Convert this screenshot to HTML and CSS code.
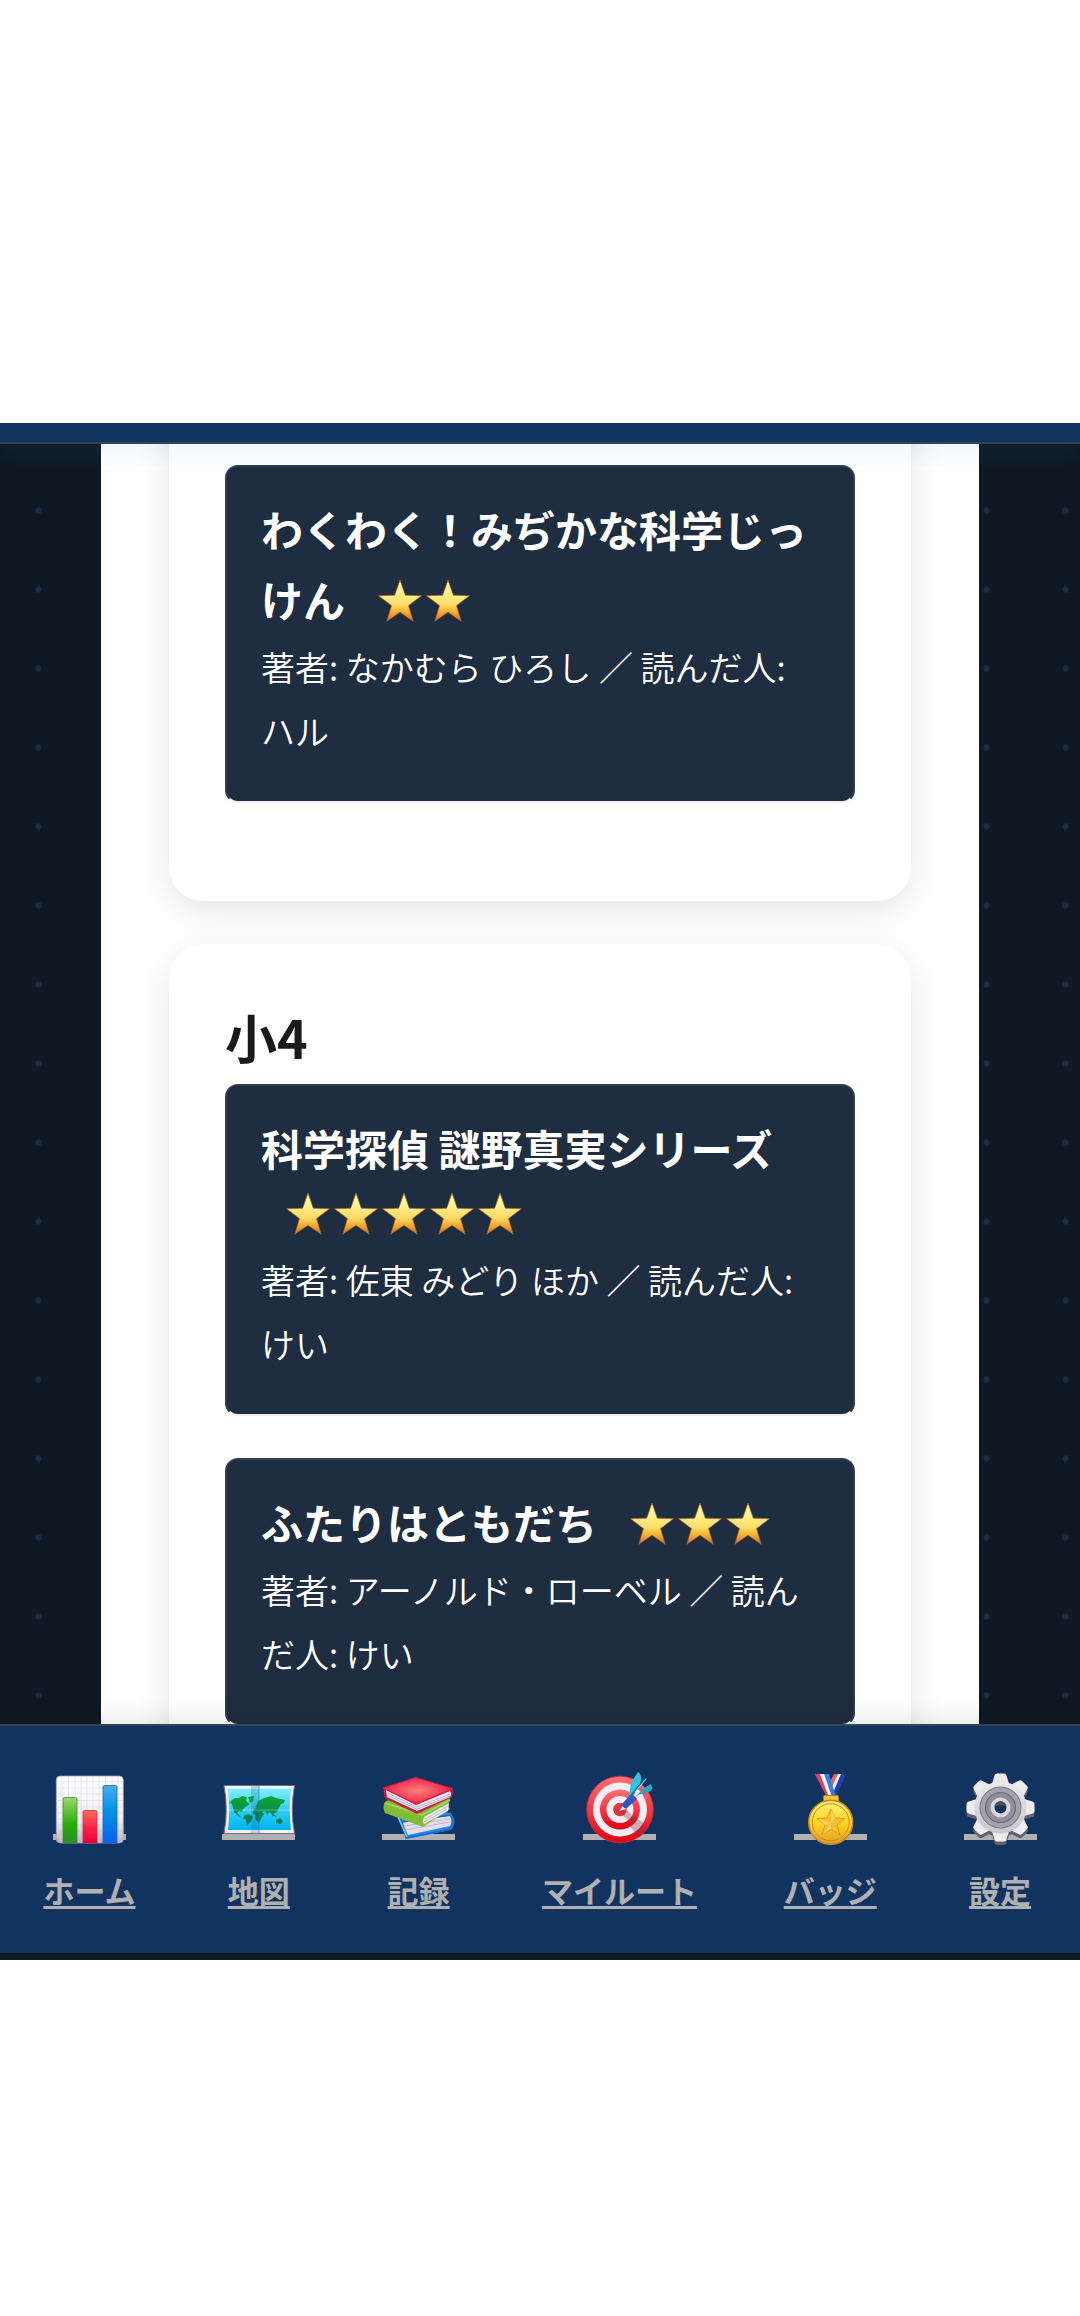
FILE: index.html
```html
<!DOCTYPE html>
<html lang="ja">
<head>
<meta charset="utf-8">
<meta name="viewport" content="width=device-width, initial-scale=1">
<title>読書記録</title>
<link rel="stylesheet" href="styles.css">
</head>
<body>
<svg class="defs" width="0" height="0" aria-hidden="true">
  <defs>
    <linearGradient id="gStar" x1="0" y1="0" x2="0" y2="1">
      <stop offset="0" stop-color="#fff6b0"/><stop offset=".3" stop-color="#fff09a"/><stop offset=".6" stop-color="#fcdc62"/><stop offset=".8" stop-color="#f3a82e"/><stop offset="1" stop-color="#d8604a"/>
    </linearGradient>
    <linearGradient id="gPaper" x1="0" y1="0" x2="0" y2="1"><stop offset="0" stop-color="#fff"/><stop offset=".65" stop-color="#f1f0f5"/><stop offset="1" stop-color="#b9b2cb"/></linearGradient>
    <linearGradient id="gGreen" x1="0" y1="0" x2="0" y2="1"><stop offset="0" stop-color="#9bd673"/><stop offset=".6" stop-color="#27ad04"/><stop offset="1" stop-color="#2e8b2b"/></linearGradient>
    <linearGradient id="gRed" x1="0" y1="0" x2="0" y2="1"><stop offset="0" stop-color="#ff6d62"/><stop offset=".5" stop-color="#fa2744"/><stop offset="1" stop-color="#e6003c"/></linearGradient>
    <linearGradient id="gBlue" x1="0" y1="0" x2="0" y2="1"><stop offset="0" stop-color="#48adf2"/><stop offset=".4" stop-color="#0795e5"/><stop offset="1" stop-color="#0562ea"/></linearGradient>
    <linearGradient id="gSea" x1="0" y1="0" x2="0" y2="1"><stop offset="0" stop-color="#7ff0ff"/><stop offset=".5" stop-color="#33cdf8"/><stop offset="1" stop-color="#00b4f2"/></linearGradient>
    <linearGradient id="gLand" x1="0" y1="0" x2="0" y2="1"><stop offset="0" stop-color="#0ba735"/><stop offset="1" stop-color="#05775c"/></linearGradient>
    <radialGradient id="gBook"><stop offset="0" stop-color="#ff8178"/><stop offset="1" stop-color="#f0214d"/></radialGradient>
    <linearGradient id="gTarget" x1="0" y1="0" x2="0" y2="1"><stop offset="0" stop-color="#f97272"/><stop offset=".5" stop-color="#ee3b48"/><stop offset="1" stop-color="#e4000c"/></linearGradient>
    <linearGradient id="gMedal" x1="0" y1="0" x2="0" y2="1"><stop offset="0" stop-color="#fff27a"/><stop offset=".55" stop-color="#ffd21f"/><stop offset="1" stop-color="#e19a2c"/></linearGradient>
    <linearGradient id="gSteel" gradientUnits="userSpaceOnUse" x1="0" y1="-33" x2="0" y2="33"><stop offset="0" stop-color="#efeef0"/><stop offset="1" stop-color="#c3c0ca"/></linearGradient>
    <symbol id="star" viewBox="0 0 44 44"><path fill="url(#gStar)" stroke="#a8651c" stroke-width=".7" stroke-linejoin="round" d="M22 1l5.300 15.200 16.200.5-13 9.900 4.700 15.700L22 33.200 8.800 42.300l4.700-15.700L.5 16.700l16.200-.5z"/></symbol>
    <g id="teeth"><path id="tooth" d="M-9-22L-6-32Q-5.500-34-3.500-34H3.500Q5.500-34 6-32L9-22z"/><use href="#tooth" transform="rotate(45)"/><use href="#tooth" transform="rotate(90)"/><use href="#tooth" transform="rotate(135)"/><use href="#tooth" transform="rotate(180)"/><use href="#tooth" transform="rotate(225)"/><use href="#tooth" transform="rotate(270)"/><use href="#tooth" transform="rotate(315)"/><circle r="26"/></g>
  </defs>
</svg>

<div class="app">
  <header class="topbar"></header>

  <main class="content">
    <div class="sheet">
      <section class="card card-scrolled">
        <article class="book">
          <strong class="book-title">わくわく！みぢかな科学じっけん</strong>
          <span class="stars" role="img" aria-label="星2つ"><svg><use href="#star"/></svg><svg><use href="#star"/></svg></span>
          <div class="book-meta">著者: なかむら ひろし ／ 読んだ人: ハル</div>
        </article>
      </section>

      <section class="card">
        <h2 class="grade">小4</h2>
        <article class="book">
          <strong class="book-title">科学探偵 謎野真実シリーズ</strong>
          <span class="stars" role="img" aria-label="星5つ"><svg><use href="#star"/></svg><svg><use href="#star"/></svg><svg><use href="#star"/></svg><svg><use href="#star"/></svg><svg><use href="#star"/></svg></span>
          <div class="book-meta">著者: 佐東 みどり ほか ／ 読んだ人: けい</div>
        </article>
        <article class="book">
          <strong class="book-title">ふたりはともだち</strong>
          <span class="stars" role="img" aria-label="星3つ"><svg><use href="#star"/></svg><svg><use href="#star"/></svg><svg><use href="#star"/></svg></span>
          <div class="book-meta">著者: アーノルド・ローベル ／ 読んだ人: けい</div>
        </article>
      </section>
    </div>
  </main>

  <nav class="tabs">
    <a class="tab" href="#home">
      <svg class="tab-icon" viewBox="0 0 73 73" aria-hidden="true">
        <path class="rule" d="M0 62h73v6H0z"/>
        <rect x="3.300" y="4" width="67" height="67" rx="4" fill="url(#gPaper)" stroke="#a59fb8" stroke-width=".8"/>
        <path d="M9 4v67M15.500 4v67M22 4v67M28 4v67M34 4v67M40 4v67M46 4v67M52.500 4v67M59 4v67M65 4v67M3 10h67M3 16h67M3 22h67M3 28.500h67M3 35h67M3 41h67M3 47h67M3 53h67M3 59h67M3 65h67" stroke="#cbc8dd" stroke-width=".5" opacity=".8"/>
        <path d="M10 71V27q0-1.500 1.500-1.500h11q1.500 0 1.500 1.500v44z" fill="url(#gGreen)" stroke="#3f8f2a" stroke-width=".8"/>
        <path d="M30 71V40q0-1.500 1.500-1.500h11q1.500 0 1.500 1.500v31z" fill="url(#gRed)" stroke="#c42c42" stroke-width=".8"/>
        <path d="M50 71V15q0-1.500 1.500-1.500h11q1.500 0 1.500 1.500v56z" fill="url(#gBlue)" stroke="#1765b4" stroke-width=".8"/>
      </svg>
      <span class="tab-label">ホーム</span>
    </a>
    <a class="tab" href="#map">
      <svg class="tab-icon" viewBox="0 0 73 73" aria-hidden="true">
        <path class="rule" d="M0 62h73v6H0z"/>
        <path d="M2 13.500H72.500Q68 38 72.500 61.500H2Q6.500 38 2 13.500z" fill="#eef0fa" stroke="#716f93" stroke-width="1"/>
        <path d="M6 17H69Q66.500 38 69 58H6Q8.500 38 6 17z" fill="url(#gSea)"/>
        <path fill="url(#gLand)" d="M10 28l3-2 4 0 3-2 5 1-1 4 4 3-3 2-4 3-1 3-3-1-2 2 4 4-3-1-4-4-1-4-1-4-2-1-2 1zM26 25l6-1-1 5-3 2zM23 43l4-1 4 3-2 4-4 5-1-6-3-2zM35 33l1-4 6-3 7-2 5 2 9 2-1 3-3 1-2 4-2 4-3 1-1 4-2-4-2-1-2 3-2-4-3 1 2 2-3 5-2 4-3-3-1-5-2-2 1-4 3-1-2-2zM51 42l2 1 2 2-3-1zM54 48l4-2 3 3-2 3-5-1z"/>
        <path d="M29 14H37V61H29z" fill="#064a7d" opacity=".2"/><path d="M37 14v47" stroke="#1780b9" stroke-width=".6"/><path d="M4 38h66" stroke="#fff" opacity=".35" stroke-width="1"/>
      </svg>
      <span class="tab-label">地図</span>
    </a>
    <a class="tab" href="#records">
      <svg class="tab-icon" viewBox="0 0 73 73" aria-hidden="true">
        <path class="rule" d="M0 62h73v6H0z"/>
        <path d="M15 43l10 24 44-9q4-4 3-11l-3-6-28-4z" fill="#268ae0"/>
        <path d="M20 50l48-6q3 5 0 10l-42 9z" fill="#e4deee"/><path d="M22 54l46-7M23 58l45-8" stroke="#b7abc5" stroke-width=".8"/>
        <path d="M15 43l6 7 48-7M20 50l4 16 44-9q4-6 1-13" fill="none" stroke="#0c6dce" stroke-width="1.500"/><path d="M16 45l9 20" stroke="#80cbff" stroke-width="1.500"/>
        <path d="M3 30q-3 4 0 11l38 14 27-18-2-3 2-8-31-9-33 12z" fill="#80bd36"/>
        <path d="M42 45l25-14-1 8-24 13q-2-3 0-7z" fill="#f1edf4"/><path d="M43 47l23-13M42 50l23-13" stroke="#b7abc5" stroke-width=".8"/>
        <path d="M3 31l37 12 28-15" fill="none" stroke="#a5d85a" stroke-width="1.500"/>
        <path d="M2 16q-1 8 2 11l31 15 35-17q2-4 0-9l-35 9z" fill="#cf1846"/>
        <path d="M4 18l30 15 34-14q2 3 0 6L35 39 5 25z" fill="#f2edf4"/><path d="M5 21l30 14 33-13M5 23l30 14 33-13" fill="none" stroke="#aaa1b8" stroke-width=".8"/>
        <path d="M1 16L33.600 5.500 70.500 16.500 34.500 32z" fill="url(#gBook)" stroke="#d21c46" stroke-width="1" stroke-linejoin="round"/>
      </svg>
      <span class="tab-label">記録</span>
    </a>
    <a class="tab" href="#route">
      <svg class="tab-icon" viewBox="0 0 73 73" aria-hidden="true">
        <path class="rule" d="M0 62h73v6H0z"/>
        <circle cx="37" cy="37.500" r="33.300" fill="url(#gTarget)" stroke="#d62b37" stroke-width=".8"/>
        <circle cx="37" cy="37.500" r="27" fill="#f9edf3"/><circle cx="37" cy="37.500" r="20" fill="url(#gTarget)"/><circle cx="37" cy="37.500" r="13.500" fill="#f9edf3"/><circle cx="37" cy="37.500" r="6.800" fill="#df3442"/>
        <path d="M38 39l7 0 6 6 9 5 2 12-6 3-8-9-1-7-7-5z" fill="#77344d" opacity=".35"/>
        <path d="M36 39l4-5 3 3z" fill="#f3f1f5"/>
        <path d="M39 32l9-10 6 5-10 9q-4 1-5-4z" fill="#2c57c5"/>
        <path d="M46 23l2-12 7-11q4 3 3 9l-7 14z" fill="#30c2de"/><path d="M51 26l10-10 7-4q4 6-3 8l-10 3z" fill="#20a7d2"/>
        <path d="M46 26L63 6" stroke="#0b73af" stroke-width="2"/><path d="M52 20L63 7" stroke="#83e9f3" stroke-width="1"/>
      </svg>
      <span class="tab-label">マイルート</span>
    </a>
    <a class="tab" href="#badges">
      <svg class="tab-icon" viewBox="0 0 73 73" aria-hidden="true">
        <path class="rule" d="M0 62h73v6H0z"/>
        <path d="M40 2h12L42 25h-8l2-10z" fill="#1e3fac"/><path d="M40 2h4l-8 17-1-7z" fill="#e6635e"/><path d="M44 2h3L39 21l-3-2z" fill="#f4f1f7"/>
        <path d="M21 2h14l7 23h-9z" fill="#3a78e5"/><path d="M21 2h5l10 23h-3z" fill="#e4405a"/><path d="M26 2h4l8 23h-3z" fill="#fff"/>
        <rect x="29.500" y="23.500" width="15" height="6" rx="1" fill="#f3c33a" stroke="#bd7c14" stroke-width="1"/>
        <circle cx="36.700" cy="50.300" r="22" fill="url(#gMedal)" stroke="#c28620" stroke-width="1.500"/>
        <circle cx="36.700" cy="50.300" r="18.500" fill="none" stroke="#c88c17" stroke-width="1"/>
        <path d="M37 37l4 9 10 .5-8 6.500 3 9.500-9-5-9 5 3-9.500-8-6.500L33 46z" fill="#f4bf32" stroke="#d0921e" stroke-width=".8"/>
        <path d="M37 37v14l4-5zM24 47l13 4-6 2zM29 62l8-11 0 6z" fill="#ffe671" opacity=".6"/>
      </svg>
      <span class="tab-label">バッジ</span>
    </a>
    <a class="tab" href="#settings">
      <svg class="tab-icon" viewBox="0 0 73 73" aria-hidden="true">
        <path class="rule" d="M0 62h73v6H0z"/>
        <use href="#teeth" transform="translate(36.500 39)" fill="#66606d"/>
        <use href="#teeth" transform="translate(36.500 35.500)" fill="url(#gSteel)"/>
        <circle cx="36.500" cy="35.500" r="20.500" fill="#a3a1ac" stroke="#74727d" stroke-width="1"/>
        <circle cx="36.500" cy="35.500" r="15" fill="#918f9b" stroke="#6b6975" stroke-width="1.200"/>
        <circle cx="36.500" cy="35.500" r="8" fill="#10345f" stroke="#d9d7dd" stroke-width="4"/>
        <path d="M30.500 35a6 6 0 0 1 12 0q-6-4-12 0z" fill="#514e5b"/>
      </svg>
      <span class="tab-label">設定</span>
    </a>
  </nav>
</div>
</body>
</html>
```
FILE: styles.css
```css
* {
  box-sizing: border-box;
}

body {
  margin: 0;
  height: 100vh;
  padding: 423px 0 356px;
  background: #fff;
  color: #1a1a1a;
  font-family: "Noto Sans CJK JP", "Noto Sans", sans-serif;
}

.defs {
  position: absolute;
}

.app {
  display: flex;
  flex-direction: column;
  height: 100%;
  overflow: hidden;
  background: #0f1923;
}

.topbar {
  position: relative;
  z-index: 1;
  flex: none;
  height: 21px;
  background: #10345f;
  border-bottom: 2px solid #394452;
  box-shadow: 0 5px 26px rgba(40, 150, 190, 0.12);
}

.content {
  flex: 1;
  min-height: 0;
  overflow: hidden;
  padding: 0 101px;
  background: radial-gradient(circle at center, #1f2f3f 2px, transparent 4px) -1px 27px / 79px 79px, #0f1923;
}

.sheet {
  display: flow-root;
  padding: 0 68px;
  background: #fff;
}

.card {
  margin-bottom: 43px;
  padding: 56px;
  border-radius: 34px;
  background: #fff;
  box-shadow: 0 10px 32px rgba(0, 0, 0, 0.1);
}

/* The first card starts above the visible part of the list */
.card-scrolled {
  margin-top: -60px;
  padding-top: 81px;
}

.grade {
  margin: 0;
  padding-bottom: 10px;
  font-size: 52px;
  line-height: 74px;
  font-weight: 700;
}

.book {
  margin-bottom: 42px;
  padding: 28px 34px 38px;
  border: 2px solid #2d3e50;
  border-bottom-color: #eceef2;
  border-radius: 13px;
  background: #1e2d3f;
  color: #fff;
  font-size: 34px;
  line-height: 64px;
}

.book-title {
  font-size: 42px;
  line-height: 67px;
  font-weight: 700;
}

.stars {
  display: inline-flex;
  gap: 4px;
  margin-left: 25px;
  vertical-align: -6px;
}

.stars svg {
  width: 44px;
  height: 44px;
}

.book-meta {
  font-weight: 350;
}

.tabs {
  position: relative;
  z-index: 1;
  flex: none;
  display: flex;
  justify-content: space-around;
  padding: 46px 0 38px;
  border-top: 2px solid #394452;
  border-bottom: 7px solid #0d1924;
  background: #10345f;
  box-shadow: 0 -5px 26px rgba(0, 0, 0, 0.1);
}

.tab {
  display: flex;
  flex-direction: column;
  align-items: center;
  gap: 20px;
  color: #b0b0b0;
  font-size: 31px;
  line-height: 50px;
  font-weight: 700;
  text-decoration: none;
}

.tab-icon {
  width: 73px;
  height: 73px;
}

.rule {
  fill: #b0b0b0;
}

.tab-label {
  text-decoration: underline 3px;
  text-underline-offset: 3px;
  text-decoration-skip-ink: none;
}
```
